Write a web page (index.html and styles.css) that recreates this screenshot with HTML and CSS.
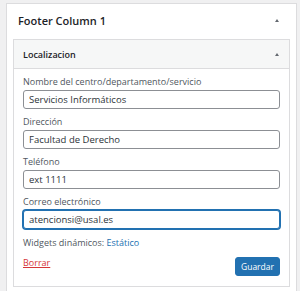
FILE: index.html
```html
<!DOCTYPE html>
<html lang="es">
<head>
<meta charset="utf-8">
<title>Footer Column 1</title>
<link rel="stylesheet" href="styles.css">
</head>
<body>
<div class="card">
  <div class="card-head">
    <h3 class="card-title">Footer Column 1</h3>
    <span class="arrow"></span>
  </div>
  <div class="widget">
    <div class="widget-head">
      <h4 class="widget-title">Localizacion</h4>
      <span class="arrow"></span>
    </div>
    <div class="widget-body">
      <div class="field">
        <label class="label">Nombre del centro/departamento/servicio</label>
        <input class="input" type="text" value="Servicios Informáticos">
      </div>
      <div class="field">
        <label class="label">Dirección</label>
        <input class="input" type="text" value="Facultad de Derecho">
      </div>
      <div class="field">
        <label class="label">Teléfono</label>
        <input class="input" type="text" value="ext 1111">
      </div>
      <div class="field">
        <label class="label">Correo electrónico</label>
        <input class="input focus" type="text" value="atencionsi@usal.es">
      </div>
      <p class="dyn">Widgets dinámicos: <a class="link" href="#">Estático</a></p>
      <div class="actions">
        <a class="delete" href="#">Borrar</a>
        <button class="btn" type="button">Guardar</button>
      </div>
    </div>
  </div>
</div>
</body>
</html>
```
FILE: styles.css
```css
* { box-sizing: border-box; }
html, body { margin: 0; padding: 0; }
body {
  background: #f0f0f1;
  font-family: "Open Sans", "Noto Sans", sans-serif;
  color: #2c3338;
  font-size: 9px;
  height: 291px;
  overflow: hidden;
}
.card {
  margin: 3px 3px 0 6px;
  background: #fff;
  border: 1px solid #dcdcde;
  padding: 0 6px 20px;
}
.card-head {
  height: 35px;
  display: flex;
  align-items: center;
  justify-content: space-between;
  padding: 0 11px 2px 5px;
}
.card-title {
  margin: 0;
  font-size: 11px;
  font-weight: 600;
  color: #1d2327;
}
.arrow {
  width: 0;
  height: 0;
  border-left: 2.5px solid transparent;
  border-right: 2.5px solid transparent;
  border-bottom: 3px solid #646970;
}
.widget {
  border: 1px solid #dcdcde;
  background: #fff;
}
.widget-head {
  height: 29px;
  background: #f6f7f7;
  border-bottom: 1px solid #dcdcde;
  display: flex;
  align-items: center;
  justify-content: space-between;
  padding: 0 10px 0 9px;
}
.widget-title {
  margin: 0;
  font-size: 9px;
  font-weight: 600;
  color: #1d2327;
}
.widget-body {
  padding: 7px 9px 10px;
}
.field {
  display: flex;
  flex-direction: column;
  margin-bottom: 3px;
}
.label {
  font-size: 9px;
  line-height: 12px;
  color: #50575e;
  margin-bottom: 2px;
}
.input {
  height: 19px;
  border: 1px solid #8c8f94;
  border-radius: 3px;
  padding: 0 5px;
  font-family: inherit;
  font-size: 9.5px;
  color: #2c3338;
  background: #fff;
  margin-bottom: 4px;
}
.input.focus {
  border-color: #2271b1;
  box-shadow: 0 0 0 1px #2271b1;
}
.dyn {
  margin: 4px 0 0;
  font-size: 9px;
  line-height: 12px;
  color: #50575e;
}
.link { color: #2271b1; text-decoration: none; }
.actions {
  display: flex;
  justify-content: space-between;
  align-items: flex-start;
  margin-top: 8px;
}
.delete {
  color: #d63638;
  text-decoration: underline;
  font-size: 9px;
  line-height: 12px;
}
.btn {
  height: 19px;
  padding: 0 5px;
  background: #2271b1;
  color: #fff;
  border: 1px solid #2271b1;
  border-radius: 3px;
  font-family: inherit;
  font-size: 8.5px;
}
```
